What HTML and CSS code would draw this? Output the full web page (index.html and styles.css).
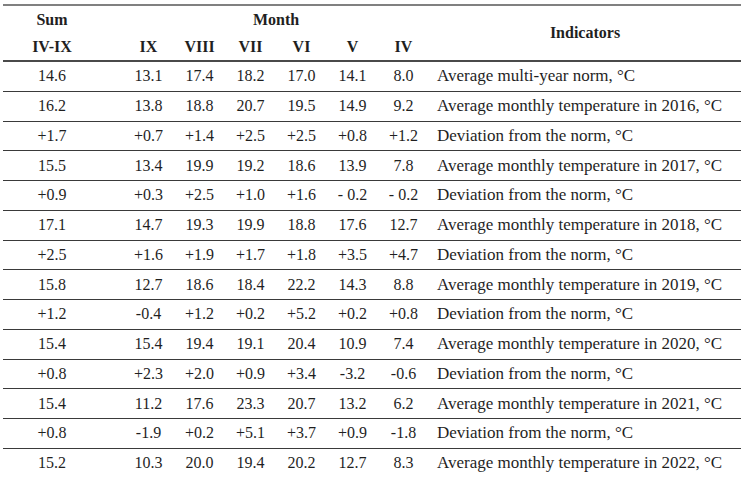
FILE: index.html
```html
<!DOCTYPE html>
<html lang="en">
<head>
<meta charset="utf-8">
<title>Temperature table</title>
<link rel="stylesheet" href="styles.css">
</head>
<body>
<table class="tbl">
  <colgroup>
    <col class="c-sum">
    <col class="c-m"><col class="c-m"><col class="c-m"><col class="c-m"><col class="c-m"><col class="c-m">
    <col class="c-ind">
  </colgroup>
  <thead>
    <tr class="h1">
      <th class="sum">Sum</th>
      <th colspan="6">Month</th>
      <th rowspan="2" class="ind-h">Indicators</th>
    </tr>
    <tr class="h2">
      <th class="sum">IV-IX</th>
      <th>IX</th><th>VIII</th><th>VII</th><th>VI</th><th>V</th><th>IV</th>
    </tr>
  </thead>
  <tbody>
    <tr><td class="sum">14.6</td><td>13.1</td><td>17.4</td><td>18.2</td><td>17.0</td><td>14.1</td><td>8.0</td><td class="ind">Average multi-year norm, °C</td></tr>
    <tr><td class="sum">16.2</td><td>13.8</td><td>18.8</td><td>20.7</td><td>19.5</td><td>14.9</td><td>9.2</td><td class="ind">Average monthly temperature in 2016, °C</td></tr>
    <tr><td class="sum">+1.7</td><td>+0.7</td><td>+1.4</td><td>+2.5</td><td>+2.5</td><td>+0.8</td><td>+1.2</td><td class="ind">Deviation from the norm, °C</td></tr>
    <tr><td class="sum">15.5</td><td>13.4</td><td>19.9</td><td>19.2</td><td>18.6</td><td>13.9</td><td>7.8</td><td class="ind">Average monthly temperature in 2017, °C</td></tr>
    <tr><td class="sum">+0.9</td><td>+0.3</td><td>+2.5</td><td>+1.0</td><td>+1.6</td><td>- 0.2</td><td>- 0.2</td><td class="ind">Deviation from the norm, °C</td></tr>
    <tr><td class="sum">17.1</td><td>14.7</td><td>19.3</td><td>19.9</td><td>18.8</td><td>17.6</td><td>12.7</td><td class="ind">Average monthly temperature in 2018, °C</td></tr>
    <tr><td class="sum">+2.5</td><td>+1.6</td><td>+1.9</td><td>+1.7</td><td>+1.8</td><td>+3.5</td><td>+4.7</td><td class="ind">Deviation from the norm, °C</td></tr>
    <tr><td class="sum">15.8</td><td>12.7</td><td>18.6</td><td>18.4</td><td>22.2</td><td>14.3</td><td>8.8</td><td class="ind">Average monthly temperature in 2019, °C</td></tr>
    <tr><td class="sum">+1.2</td><td>-0.4</td><td>+1.2</td><td>+0.2</td><td>+5.2</td><td>+0.2</td><td>+0.8</td><td class="ind">Deviation from the norm, °C</td></tr>
    <tr><td class="sum">15.4</td><td>15.4</td><td>19.4</td><td>19.1</td><td>20.4</td><td>10.9</td><td>7.4</td><td class="ind">Average monthly temperature in 2020, °C</td></tr>
    <tr><td class="sum">+0.8</td><td>+2.3</td><td>+2.0</td><td>+0.9</td><td>+3.4</td><td>-3.2</td><td>-0.6</td><td class="ind">Deviation from the norm, °C</td></tr>
    <tr><td class="sum">15.4</td><td>11.2</td><td>17.6</td><td>23.3</td><td>20.7</td><td>13.2</td><td>6.2</td><td class="ind">Average monthly temperature in 2021, °C</td></tr>
    <tr><td class="sum">+0.8</td><td>-1.9</td><td>+0.2</td><td>+5.1</td><td>+3.7</td><td>+0.9</td><td>-1.8</td><td class="ind">Deviation from the norm, °C</td></tr>
    <tr><td class="sum">15.2</td><td>10.3</td><td>20.0</td><td>19.4</td><td>20.2</td><td>12.7</td><td>8.3</td><td class="ind">Average monthly temperature in 2022, °C</td></tr>
  </tbody>
</table>
</body>
</html>
```

FILE: styles.css
```css
html, body {
  margin: 0;
  padding: 0;
  background: #ffffff;
}
body {
  padding: 4px 0 0 3px;
}
.tbl {
  border-collapse: collapse;
  table-layout: fixed;
  width: 738px;
  font-family: "Liberation Serif", "Times New Roman", serif;
  font-size: 16px;
  color: #1f1f1f;
  border-top: 2px solid #808080;
}
.c-sum { width: 120px; }
.c-m { width: 51px; }
.c-ind { width: 312px; }
.tbl th, .tbl td {
  padding: 0;
  text-align: center;
  vertical-align: middle;
  white-space: nowrap;
}
.tbl th {
  font-weight: bold;
}
.h1 th, .h2 th {
  height: 27px;
}
.h2 th {
  border-bottom: 2px solid #4a4a4a;
}
.ind-h {
  border-bottom: 2px solid #4a4a4a;
}
.tbl .sum {
  padding-right: 22px;
}
.tbl tbody td {
  height: 28.75px;
  border-bottom: 1px solid #3a3a3a;
}
.tbl .ind {
  text-align: left;
  padding-left: 8px;
  font-size: 17px;
}
```
